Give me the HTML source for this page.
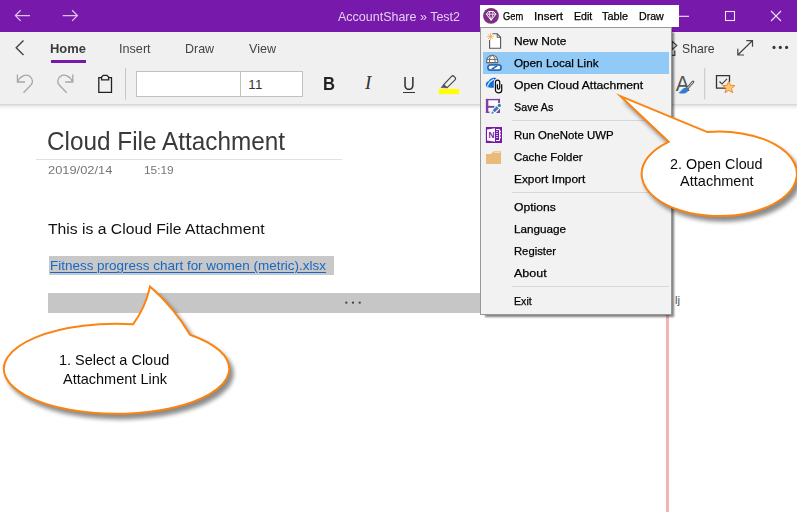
<!DOCTYPE html>
<html><head><meta charset="utf-8"><title>Cloud File Attachment</title>
<style>
html,body{margin:0;padding:0}
body{width:797px;height:512px;overflow:hidden;background:#fff;position:relative;font-family:"Liberation Sans",sans-serif}
.t{position:absolute;white-space:pre;line-height:normal;transform-origin:0 50%;display:block}
.a{position:absolute}
svg{position:absolute;overflow:visible}
</style></head><body>

<div class="a" style="left:0;top:0;width:797px;height:32px;background:#7719aa"></div>
<svg style="left:0;top:0" width="100" height="32" fill="none" stroke="#dcc3ec" stroke-width="1.3">
<path d="M30 15.6H15.5M20.7 10.3L15.4 15.6L20.7 20.9"/>
<path d="M62.700 15.600H77.300M72.100 10.300L77.400 15.600L72.100 20.900"/></svg>
<span class="t" style="left:338.0px;top:9.04px;font-size:13px;color:#e3cff0;font-weight:400;font-style:normal;font-family:'Liberation Sans',sans-serif;transform:scaleX(0.9610);">AccountShare » Test2</span>
<svg style="left:670px;top:0" width="127" height="32" fill="none" stroke="#f3e8f9" stroke-width="1.1">
<path d="M9 16.3H19"/><rect x="55.500" y="11.500" width="9" height="9"/>
<path d="M101 11L111 21M111 11L101 21"/></svg>
<div class="a" style="left:0;top:32px;width:797px;height:72px;background:#f0f0f0"></div>
<div class="a" style="left:0;top:104px;width:797px;height:6px;background:linear-gradient(#d0d0d0,#e4e4e4 22%,#f3f3f3 55%,#fff)"></div>
<svg style="left:0;top:32px" width="40" height="30" fill="none" stroke="#444" stroke-width="1.4"><path d="M23.5 8.6L16.2 15.8L23.5 23"/></svg>
<span class="t" style="left:50.0px;top:41.23px;font-size:13px;color:#3c3c3c;font-weight:700;font-style:normal;font-family:'Liberation Sans',sans-serif;transform:scaleX(0.9965);">Home</span>
<div class="a" style="left:51px;top:60px;width:35px;height:3px;background:#7719aa"></div>
<span class="t" style="left:119.0px;top:41.23px;font-size:13px;color:#444;font-weight:400;font-style:normal;font-family:'Liberation Sans',sans-serif;transform:scaleX(0.9718);">Insert</span>
<span class="t" style="left:185.2px;top:41.23px;font-size:13px;color:#444;font-weight:400;font-style:normal;font-family:'Liberation Sans',sans-serif;transform:scaleX(0.9590);">Draw</span>
<span class="t" style="left:249.0px;top:41.23px;font-size:13px;color:#444;font-weight:400;font-style:normal;font-family:'Liberation Sans',sans-serif;transform:scaleX(0.9659);">View</span>
<span class="t" style="left:682.2px;top:41.09px;font-size:13.6px;color:#3a3a3a;font-weight:400;font-style:normal;font-family:'Liberation Sans',sans-serif;transform:scaleX(0.8985);">Share</span>
<svg style="left:660px;top:32px" width="137" height="30" fill="none" stroke="#444" stroke-width="1.2">
<path d="M12 9.300L16.800 13.500L12 17.700Z"/><path d="M14.800 18.500V23.300H12"/>
<path d="M78 22.8L92.3 8.8M86.3 8.6h6.2v6.2M84 23h-6.2v-6.2"/>
<g fill="#333" stroke="none"><circle cx="114" cy="15.400" r="1.550"/><circle cx="120.300" cy="15.400" r="1.550"/><circle cx="126.600" cy="15.400" r="1.550"/></g></svg>
<svg style="left:0;top:64px" width="797" height="40" fill="none">
<g stroke="#a6a6a6" stroke-width="1.3">
<path d="M17.4 10.5V18H25M17.6 17.8C20 12 26 9.5 30 12.5C33.5 15.5 33 19 30.5 21.500L23.5 28.7"/>
<path d="M72.800 10.500V18H65.200M72.600 17.800C70.200 12 64.200 9.500 60.200 12.500C56.700 15.500 57.200 19 59.700 21.500L66.700 28.700"/>
</g>
<g stroke="#222" stroke-width="1.3">
<path d="M101.500 13.600H98.800V28.300H111.500V13.600H108.800"/>
<path d="M101.600 15.800V13L103.300 11.400H106.900L108.600 13V15.800Z"/>
</g>
<path d="M125.500 4V35.500M704.700 4V35.500" stroke="#c6c6c6" stroke-width="1"/>
</svg>
<div class="a" style="left:136px;top:71px;width:165px;height:24px;background:#fff;border:1px solid #c2c2c2"></div>
<div class="a" style="left:240px;top:72px;width:1px;height:24px;background:#c2c2c2"></div>
<span class="t" style="left:248.3px;top:76.96px;font-size:13.3px;color:#333;font-weight:400;font-style:normal;font-family:'Liberation Sans',sans-serif;letter-spacing:0.4px;">11</span>
<span class="t" style="left:322.6px;top:72.76px;font-size:18.5px;color:#222;font-weight:700;font-style:normal;font-family:'Liberation Sans',sans-serif;transform:scaleX(0.8972);">B</span>
<span class="t" style="left:365.0px;top:72.47px;font-size:19px;color:#333;font-weight:400;font-style:italic;font-family:'Liberation Serif',serif;">I</span>
<span class="t" style="left:403.3px;top:72.57px;font-size:18.6px;color:#333;font-weight:400;font-style:normal;font-family:'Liberation Sans',sans-serif;transform:scaleX(0.8856);">U</span>
<div class="a" style="left:403px;top:91.5px;width:12px;height:1.2px;background:#333"></div>
<svg style="left:436px;top:70px" width="26" height="26" fill="none">
<rect x="2.800" y="18.900" width="20.200" height="5.200" fill="#ffff00"/>
<path d="M7.500 14.800L15.800 6.200Q16.800 5.300 17.800 6.200L19.200 7.600Q20 8.600 19.200 9.600L11 17.800Z" stroke="#444" stroke-width="1.200"/>
<path d="M7.500 14.800L5.200 17.600H10.800L11 17.600Z" fill="#555" stroke="#555" stroke-width="0.800"/>
</svg>
<svg style="left:670px;top:66px" width="30" height="34" fill="none">
<text x="5.700" y="24.600" font-family="Liberation Sans, sans-serif" font-size="21.500" fill="#555" textLength="13.600" lengthAdjust="spacingAndGlyphs">A</text>
<path d="M17.200 22.400L23 15.800" stroke="#555" stroke-width="2.600" stroke-linecap="round"/>
<path d="M17.600 22L22.800 16.100" stroke="#f4f4f4" stroke-width="0.9" stroke-linecap="round"/>
<path d="M8.300 26.700C11 26.300 11.800 22.200 15.300 21.700C17.300 21.700 18.600 23.200 18 25C17 27.600 11.500 28.300 8.300 26.700Z" fill="#2f7dd3"/>
</svg>
<svg style="left:712px;top:70px" width="26" height="28" fill="none">
<path d="M14 18.200H4.500V5.600H17.500V12" stroke="#333" stroke-width="1.300"/>
<path d="M7.500 11.500L10 14L15 8.800" stroke="#444" stroke-width="1.200"/>
<path d="M16.800 11.200L18.500 15.300L22.900 15.600L19.500 18.400L20.600 22.700L16.800 20.300L13 22.700L14.100 18.400L10.700 15.600L15.100 15.300Z" fill="#ffc978" stroke="#f08a2c" stroke-width="1"/>
</svg>
<span class="t" style="left:47.0px;top:126.60px;font-size:25.3px;color:#3a3a3a;font-weight:400;font-style:normal;font-family:'Liberation Sans',sans-serif;transform:scaleX(0.9617);">Cloud File Attachment</span>
<div class="a" style="left:36px;top:158.5px;width:306px;height:1px;background:#e1e1e1"></div>
<span class="t" style="left:48.0px;top:163.89px;font-size:11.5px;color:#767676;font-weight:400;font-style:normal;font-family:'Liberation Sans',sans-serif;transform:scaleX(1.1170);">2019/02/14</span>
<span class="t" style="left:143.7px;top:163.89px;font-size:11.5px;color:#767676;font-weight:400;font-style:normal;font-family:'Liberation Sans',sans-serif;transform:scaleX(1.0319);">15:19</span>
<span class="t" style="left:47.7px;top:220.27px;font-size:15.5px;color:#111;font-weight:400;font-style:normal;font-family:'Liberation Sans',sans-serif;transform:scaleX(1.0133);">This is a Cloud File Attachment</span>
<div class="a" style="left:49px;top:256px;width:285px;height:18.500px;background:#c8c8c8"></div>
<span class="t" style="left:50.0px;top:257.98px;font-size:13.5px;color:#1668c4;font-weight:400;font-style:normal;font-family:'Liberation Sans',sans-serif;transform:scaleX(0.9970);text-decoration:underline;text-underline-offset:1.8px;text-decoration-thickness:1px;">Fitness progress chart for women (metric).xlsx</span>
<div class="a" style="left:48px;top:293px;width:632px;height:19.500px;background:#c6c6c6"></div>
<svg style="left:340px;top:296px" width="30" height="12"><g fill="#444"><circle cx="6.300" cy="6.700" r="1.150"/><circle cx="13" cy="6.700" r="1.150"/><circle cx="19.700" cy="6.700" r="1.150"/></g></svg>
<div class="a" style="left:666px;top:100px;width:3px;height:412px;background:#f2b6b6"></div>
<div class="a" style="left:671px;top:290px;width:40px;height:25px;background:#fff"></div>
<span class="t" style="left:675.0px;top:294.19px;font-size:11.5px;color:#555;font-weight:400;font-style:normal;font-family:'Liberation Sans',sans-serif;">lj</span>
<svg style="left:0;top:0" width="797" height="512">
<defs>
<filter id="sh" x="-20%" y="-20%" width="150%" height="150%"><feGaussianBlur stdDeviation="1.9"/></filter>
<radialGradient id="cg" cx="50%" cy="50%" r="62%"><stop offset="0.8" stop-color="#fff"/><stop offset="1" stop-color="#fef4e8"/></radialGradient>
</defs>
<path d="M133.0 324.3Q145.5 307.5 150.0 286.6Q174.1 307.8 190.0 334.7A112.7 45 0 1 1 133.0 324.3Z" transform="translate(3.6,4.6)" fill="#000" opacity="0.45" filter="url(#sh)" stroke="#000" stroke-width="2"/>
<path d="M133.0 324.3Q145.5 307.5 150.0 286.6Q174.1 307.8 190.0 334.7A112.7 45 0 1 1 133.0 324.3Z" fill="#fff" stroke="#fb8312" stroke-width="2" stroke-miterlimit="10"/>
</svg>
<span class="t" style="left:59.4px;top:352.09px;font-size:14.6px;color:#0a0a0a;font-weight:400;font-style:normal;font-family:'Liberation Sans',sans-serif;transform:scaleX(0.9923);">1. Select a Cloud</span>
<span class="t" style="left:63.0px;top:370.99px;font-size:14.6px;color:#0a0a0a;font-weight:400;font-style:normal;font-family:'Liberation Sans',sans-serif;transform:scaleX(0.9937);">Attachment Link</span>
<div class="a" style="left:480px;top:5px;width:199px;height:22px;background:#fff"></div>
<svg style="left:482px;top:7px" width="18" height="18"><circle cx="9" cy="8.900" r="7.900" fill="#7d2f84"/>
<path d="M4.300 7.200L6.600 4.500H11.600L13.900 7.200L9.100 13.300Z" fill="none" stroke="#fff" stroke-width="1" stroke-linejoin="round"/>
<path d="M4.300 7.200H13.900M7.700 4.500L7.100 7.200L9.100 13.300L11.100 7.200L10.500 4.500" fill="none" stroke="#fff" stroke-width="0.8"/></svg>
<span class="t" style="left:502.8px;top:10.07px;font-size:11.3px;color:#000;font-weight:400;font-style:normal;font-family:'Liberation Sans',sans-serif;transform:scaleX(0.8250);-webkit-text-stroke:0.25px #000;">Gem</span>
<span class="t" style="left:533.5px;top:10.07px;font-size:11.3px;color:#000;font-weight:400;font-style:normal;font-family:'Liberation Sans',sans-serif;transform:scaleX(1.0260);-webkit-text-stroke:0.25px #000;">Insert</span>
<span class="t" style="left:573.5px;top:10.07px;font-size:11.3px;color:#000;font-weight:400;font-style:normal;font-family:'Liberation Sans',sans-serif;transform:scaleX(0.9400);-webkit-text-stroke:0.25px #000;">Edit</span>
<span class="t" style="left:602.4px;top:10.07px;font-size:11.3px;color:#000;font-weight:400;font-style:normal;font-family:'Liberation Sans',sans-serif;transform:scaleX(0.9624);-webkit-text-stroke:0.25px #000;">Table</span>
<span class="t" style="left:639.2px;top:10.07px;font-size:11.3px;color:#000;font-weight:400;font-style:normal;font-family:'Liberation Sans',sans-serif;transform:scaleX(0.9403);-webkit-text-stroke:0.25px #000;">Draw</span>
<div class="a" style="left:480px;top:27px;width:190px;height:286px;background:#f2f2f2;border:1px solid #979797;box-shadow:3.5px 3.5px 2px -1.5px rgba(0,0,0,0.5)"></div>
<div class="a" style="left:483px;top:52px;width:186px;height:21.500px;background:#91c9f7"></div>
<span class="t" style="left:514.3px;top:34.79px;font-size:11.5px;color:#000;font-weight:400;font-style:normal;font-family:'Liberation Sans',sans-serif;transform:scaleX(1.0376);-webkit-text-stroke:0.25px #000;">New Note</span>
<span class="t" style="left:514.3px;top:56.89px;font-size:11.5px;color:#000;font-weight:400;font-style:normal;font-family:'Liberation Sans',sans-serif;transform:scaleX(1.0177);-webkit-text-stroke:0.25px #000;">Open Local Link</span>
<span class="t" style="left:514.3px;top:78.89px;font-size:11.5px;color:#000;font-weight:400;font-style:normal;font-family:'Liberation Sans',sans-serif;transform:scaleX(1.0581);-webkit-text-stroke:0.25px #000;">Open Cloud Attachment</span>
<span class="t" style="left:514.3px;top:100.79px;font-size:11.5px;color:#000;font-weight:400;font-style:normal;font-family:'Liberation Sans',sans-serif;transform:scaleX(0.9336);-webkit-text-stroke:0.25px #000;">Save As</span>
<span class="t" style="left:514.3px;top:128.69px;font-size:11.5px;color:#000;font-weight:400;font-style:normal;font-family:'Liberation Sans',sans-serif;transform:scaleX(0.9924);-webkit-text-stroke:0.25px #000;">Run OneNote UWP</span>
<span class="t" style="left:514.3px;top:150.69px;font-size:11.5px;color:#000;font-weight:400;font-style:normal;font-family:'Liberation Sans',sans-serif;transform:scaleX(0.9935);-webkit-text-stroke:0.25px #000;">Cache Folder</span>
<span class="t" style="left:514.3px;top:172.59px;font-size:11.5px;color:#000;font-weight:400;font-style:normal;font-family:'Liberation Sans',sans-serif;transform:scaleX(1.0329);-webkit-text-stroke:0.25px #000;">Export Import</span>
<span class="t" style="left:514.3px;top:201.19px;font-size:11.5px;color:#000;font-weight:400;font-style:normal;font-family:'Liberation Sans',sans-serif;transform:scaleX(1.0570);-webkit-text-stroke:0.25px #000;">Options</span>
<span class="t" style="left:514.3px;top:223.09px;font-size:11.5px;color:#000;font-weight:400;font-style:normal;font-family:'Liberation Sans',sans-serif;transform:scaleX(1.0162);-webkit-text-stroke:0.25px #000;">Language</span>
<span class="t" style="left:514.3px;top:244.99px;font-size:11.5px;color:#000;font-weight:400;font-style:normal;font-family:'Liberation Sans',sans-serif;transform:scaleX(0.9783);-webkit-text-stroke:0.25px #000;">Register</span>
<span class="t" style="left:514.3px;top:266.89px;font-size:11.5px;color:#000;font-weight:400;font-style:normal;font-family:'Liberation Sans',sans-serif;transform:scaleX(1.0877);-webkit-text-stroke:0.25px #000;">About</span>
<span class="t" style="left:514.3px;top:294.99px;font-size:11.5px;color:#000;font-weight:400;font-style:normal;font-family:'Liberation Sans',sans-serif;transform:scaleX(0.9232);-webkit-text-stroke:0.25px #000;">Exit</span>
<div class="a" style="left:512px;top:120px;width:157px;height:1px;background:#d7d7d7"></div>
<div class="a" style="left:512px;top:192px;width:157px;height:1px;background:#d7d7d7"></div>
<div class="a" style="left:512px;top:286px;width:157px;height:1px;background:#d7d7d7"></div>
<svg style="left:480px;top:27px" width="30" height="150" fill="none">
<!-- new note -->
<path d="M12.500 6.800H17.300L20.600 10.200V21.300H9.600V13" stroke="#555" stroke-width="1.100" fill="#fff"/>
<path d="M17.200 6.900V10.300H20.500" stroke="#555" stroke-width="1"/>
<g stroke="#f2ad55" stroke-width="0.85"><path d="M10.500 6.200V13M7.100 9.600H13.900M8.100 7.200L12.900 12M12.900 7.200L8.100 12"/></g>
<!-- link -->
<path d="M6.700 35.800V33.800A5.500 5.500 0 0 1 17.700 33.800V35.800Z" stroke="#666" stroke-width="1.100" fill="#fff"/>
<path d="M6.700 32.400H17.700M6.700 35.600H17.700M9.500 32.400V35.800M15 32.400V35.800M9.300 32.300C9.800 30.400 10.800 29 12.200 28.400C13.600 29 14.600 30.400 15.100 32.300" stroke="#666" stroke-width="1"/>
<rect x="7.900" y="37.900" width="13.200" height="5.200" rx="2.600" stroke="#2f6db0" stroke-width="1.800" fill="#fff"/>
<path d="M11.800 42.300L17.300 38.600" stroke="#2f6db0" stroke-width="1.700"/>
<!-- cloud -->
<path d="M5.800 57.800C5.600 55.500 7.500 54.300 8.600 54.200C9.700 51.600 12.800 50.300 16.200 51.100L16 60.700H10.500C7 60.700 6 59.500 5.800 57.800Z" fill="#0f70e0"/>
<path d="M7.400 59.600C8.300 56.400 10.800 53.600 14 52.300" stroke="#f2f2f2" stroke-width="1.200"/>
<path d="M21.700 57.300V63.200A3.100 2.600 0 0 1 15.450 63.200V55.300A2.100 2.100 0 0 1 19.700 55.300V61A1.150 1.150 0 0 1 17.400 61V57.300" stroke="#f6f6f6" stroke-width="3.200" stroke-linecap="round"/>
<path d="M21.700 57.300V63.200A3.100 2.600 0 0 1 15.450 63.200V55.300A2.100 2.100 0 0 1 19.700 55.300V61A1.150 1.150 0 0 1 17.400 61V57.300" stroke="#0a0a0a" stroke-width="1.250"/>
<!-- save as -->
<rect x="5.900" y="71.900" width="14.100" height="14.100" fill="#fbfbfb"/>
<g fill="#7f3fa6"><rect x="5.900" y="71.900" width="14.100" height="1.400"/><rect x="5.900" y="71.900" width="2.400" height="14.100"/><rect x="18.100" y="71.900" width="1.900" height="4.300"/><rect x="5.900" y="78.900" width="8.700" height="1.900"/><rect x="5.900" y="84.700" width="4.200" height="1.300"/><path d="M20 81.500V86H16Z"/></g>
<path d="M19.300 78.500L11.600 86.200" stroke="#f6f6f6" stroke-width="4.600" stroke-linecap="round"/>
<circle cx="19.300" cy="78.400" r="1.600" fill="#3b78b6"/>
<path d="M17.700 80.300L13.700 84.300" stroke="#3b78b6" stroke-width="3"/>
<path d="M12.300 84.200L14 85.900L11.100 86.900Z" fill="#3b78b6"/>
<!-- onenote -->
<rect x="5.900" y="100" width="16.100" height="16" fill="#7719aa"/>
<path d="M7 102.500L15 101.300V114.700L7 113.500Z" fill="#fff"/>
<text x="8.500" y="111.100" font-family="Liberation Sans, sans-serif" font-size="8.300" font-weight="700" fill="#7719aa">N</text>
<path d="M16 102.500H19.500V113.500H16" stroke="#fff" stroke-width="1" fill="none"/>
<path d="M19.500 104.500H21M19.500 107.500H21M19.500 110.500H21" stroke="#fff" stroke-width="1.600"/>
<path d="M16 104.500H18M16 106.500H18M16 108.500H18M16 110.500H18" stroke="#fff" stroke-width="0.7"/>
<!-- folder -->
<path d="M6 127H11L13.500 124.200H21V137H6Z" fill="#e8bc78"/>
<path d="M14.500 125.300H20" stroke="#fff3dc" stroke-width="0.8"/>
</svg>
<svg style="left:0;top:0" width="797" height="512">
<path d="M668.7 141.8L620.5 96.2L707.3 132.1A77.6 42.25 0 1 1 668.7 141.8Z" transform="translate(3.6,4.6)" fill="#000" opacity="0.45" filter="url(#sh)" stroke="#000" stroke-width="2"/>
<path d="M668.7 141.8L620.5 96.2L707.3 132.1A77.6 42.25 0 1 1 668.7 141.8Z" fill="#fff" stroke="#fb8312" stroke-width="2" stroke-miterlimit="10"/>
</svg>
<span class="t" style="left:670.4px;top:155.59px;font-size:14.6px;color:#0a0a0a;font-weight:400;font-style:normal;font-family:'Liberation Sans',sans-serif;transform:scaleX(0.9838);">2. Open Cloud</span>
<span class="t" style="left:680.0px;top:172.79px;font-size:14.6px;color:#0a0a0a;font-weight:400;font-style:normal;font-family:'Liberation Sans',sans-serif;transform:scaleX(0.9969);">Attachment</span>
</body></html>
